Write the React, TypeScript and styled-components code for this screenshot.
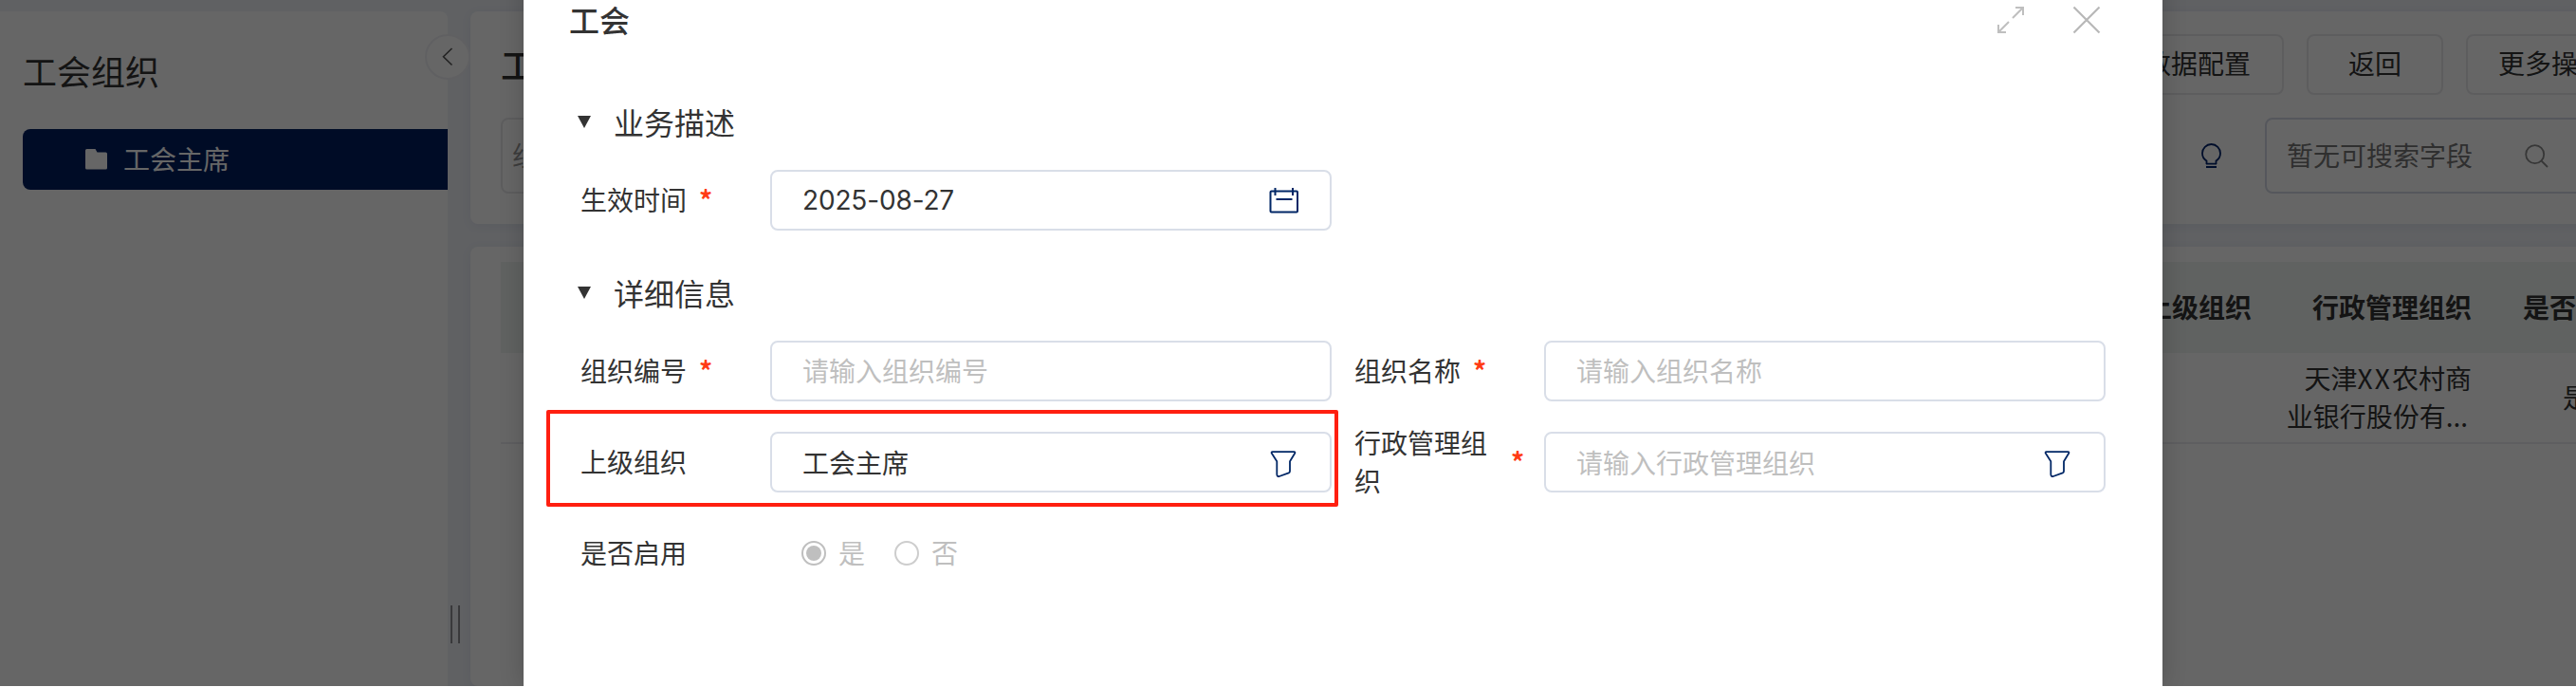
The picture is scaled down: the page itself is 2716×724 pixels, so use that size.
import React from 'react';
import styled, { createGlobalStyle } from 'styled-components';

const GlobalStyle = createGlobalStyle`
  * { box-sizing: border-box; }
  body {
    margin: 0;
    font-family: 'Noto Sans CJK SC', sans-serif;
    font-size: 28px;
    line-height: 40px;
    color: #333;
  }
`;

const Screen = styled.div`
  position: relative;
  width: 2716px;
  height: 723px;
  overflow: hidden;
  background: #eff2f8;
`;

/* ---------- page behind the dialog ---------- */

const Page = styled.div`
  display: flex;
  height: 100%;
  padding-top: 12px;
`;

const Sidebar = styled.aside`
  position: relative;
  flex: none;
  width: 472px;
  padding: 36px 0 0 24px;
  background: #fff;
  border-top-right-radius: 8px;
`;

const SidebarTitle = styled.h2`
  margin: 0 0 36px;
  font-size: 36px;
  font-weight: 400;
  line-height: 52px;
`;

const TreeItem = styled.div`
  display: flex;
  align-items: center;
  gap: 17px;
  height: 64px;
  padding-left: 66px;
  color: #fff;
  background: #001e60;
  border-radius: 8px 0 0 8px;
`;

const CollapseButton = styled.button`
  position: absolute;
  top: 24px;
  right: -24px;
  display: flex;
  align-items: center;
  justify-content: center;
  width: 48px;
  height: 48px;
  padding: 0;
  background: #fff;
  border: 2px solid #f0f1f4;
  border-radius: 50%;
`;

const Splitter = styled.div`
  display: flex;
  align-items: flex-start;
  gap: 6px;
  flex: none;
  width: 24px;
  padding: 626px 0 0 3px;
`;

const SplitterBar = styled.span`
  width: 2px;
  height: 40px;
  background: #8f9093;
`;

const Main = styled.main`
  display: flex;
  flex: none;
  flex-direction: column;
  gap: 24px;
  width: 2356px;
`;

const Card = styled.section<{ $grow?: boolean }>`
  flex: ${(p) => (p.$grow ? '1' : 'none')};
  height: ${(p) => (p.$grow ? 'auto' : '224px')};
  padding: ${(p) => (p.$grow ? '16px' : '24px')} 32px 0;
  background: #fff;
  border-radius: 8px;
  box-shadow: 0 2px 12px rgba(20, 40, 80, 0.06);
`;

const Toolbar = styled.div`
  display: flex;
  align-items: center;
  gap: 24px;
  height: 64px;
  margin-bottom: 24px;
`;

const PageTitle = styled.h1`
  flex: 1;
  margin: -3px 0 0;
  font-size: 36px;
  font-weight: 500;
`;

const Button = styled.button<{ $width: number; $start?: boolean }>`
  width: ${(p) => p.$width}px;
  height: 64px;
  padding: 0 32px 4px;
  text-align: ${(p) => (p.$start ? 'left' : 'center')};
  font: inherit;
  color: #333;
  background: #fff;
  border: 2px solid #e9e9ec;
  border-radius: 8px;
`;

const FilterBar = styled.div`
  display: flex;
  align-items: center;
  justify-content: space-between;
  height: 80px;
`;

const Text = styled.span`
  margin-top: -3px;
`;

const FilterInput = styled.div`
  display: flex;
  align-items: center;
  width: 420px;
  height: 80px;
  padding: 0 10px;
  color: #999;
  border: 2px solid #e9e9ec;
  border-radius: 8px;
`;

const FilterTools = styled.div`
  display: flex;
  align-items: center;
  gap: 46px;
`;

const SearchBox = styled.div`
  display: flex;
  align-items: center;
  gap: 55px;
  width: 432px;
  height: 80px;
  padding-left: 21px;
  color: #757575;
  border: 2px solid #d5d9e6;
  border-radius: 8px;
`;

const Row = styled.div<{ $head?: boolean }>`
  display: grid;
  grid-template-columns: 1862px 232px 188px 1fr;
  align-items: center;
  height: 96px;
  padding-bottom: 3px;
  font-weight: ${(p) => (p.$head ? 700 : 400)};
  background: ${(p) => (p.$head ? '#f1f5f3' : 'transparent')};
  border-bottom: ${(p) => (p.$head ? 'none' : '2px solid #ececf0')};
`;

const Cell = styled.div<{ $align: 'right' | 'center' }>`
  padding: 0 16px;
  text-align: ${(p) => p.$align};
`;

const CellLine = styled.div<{ $indent?: number }>`
  padding-right: ${(p) => p.$indent ?? 0}px;
`;

const Latin = styled.span`
  letter-spacing: 2.2px;
`;

const Mask = styled.div`
  position: absolute;
  inset: 0;
  background: rgba(0, 0, 0, 0.6);
`;

/* ---------- dialog ---------- */

const Dialog = styled.div`
  position: absolute;
  top: -40px;
  bottom: 0;
  left: 552px;
  width: 1728px;
  padding: 40px 60px 0 48px;
  background: #fff;
  box-shadow: 0 0 24px rgba(0, 0, 0, 0.2);
`;

const DialogHeader = styled.header`
  display: flex;
  align-items: center;
  height: 42px;
  margin-bottom: 54px;
`;

const DialogTitle = styled.h3`
  flex: 1;
  margin: -3px 0 0;
  font-size: 32px;
  font-weight: 500;
  line-height: 42px;
`;

const HeaderIcons = styled.div`
  display: flex;
  gap: 50px;
  padding-right: 5px;
`;

const SectionTitle = styled.div<{ $spaced?: boolean }>`
  display: flex;
  align-items: center;
  gap: 24px;
  height: 67px;
  margin-top: ${(p) => (p.$spaced ? '17px' : '0')};
  padding-left: 9px;
  font-size: 32px;
`;

const Triangle = styled.span`
  width: 0;
  height: 0;
  margin-top: -2px;
  border: 7px solid transparent;
  border-top: 13px solid #333;
  border-bottom: none;
`;

const FormRow = styled.div`
  display: flex;
  align-items: center;
  gap: 24px;
  height: 96px;
  padding-left: 12px;
`;

const Field = styled.div`
  display: flex;
  align-items: center;
  width: 792px;
`;

const LabelBox = styled.div`
  display: flex;
  align-items: center;
  flex: none;
  width: 200px;
`;

const Label = styled.label`
  max-width: 152px;
  margin-top: -2px;
`;

const Required = styled.span`
  margin: -2px 0 0 13px;
  font-weight: 700;
  color: #ff3b14;
`;

const Control = styled.div<{ $muted?: boolean; $lower?: boolean }>`
  display: flex;
  align-items: center;
  justify-content: space-between;
  width: 592px;
  height: 64px;
  padding: ${(p) => (p.$lower ? '3px 35px 0 32px' : '0 32px')};
  color: ${(p) => (p.$muted ? '#bfbfbf' : '#333')};
  border: 2px solid #d9dee8;
  border-radius: 8px;
`;

const DateText = styled.span`
  font-family: Inter, sans-serif;
  letter-spacing: -0.15px;
`;

const RadioGroup = styled.div`
  display: flex;
  align-items: center;
  gap: 31px;
  padding-left: 33px;
  color: #bfbfbf;
`;

const RadioOption = styled.div`
  display: flex;
  align-items: center;
  gap: 13px;
`;

const RadioMark = styled.span<{ $checked?: boolean }>`
  display: flex;
  align-items: center;
  justify-content: center;
  width: 26px;
  height: 26px;
  margin-top: -1px;
  border: 2px solid ${(p) => (p.$checked ? '#bfbfbf' : '#cdcdcd')};
  border-radius: 50%;

  &::after {
    content: '';
    width: 16px;
    height: 16px;
    border-radius: 50%;
    background: ${(p) => (p.$checked ? '#bfbfbf' : 'transparent')};
  }
`;

const Highlight = styled.div`
  position: absolute;
  top: 472px;
  left: 24px;
  width: 835px;
  height: 102px;
  border: 4px solid #ff1f10;
  border-radius: 2px;
`;

/* ---------- icons ---------- */

const FolderIcon = () => (
  <svg width="23" height="22" viewBox="0 0 23 22">
    <path d="M1.5 0H10.5L12.5 3.5H21.5Q23 3.5 23 5V20Q23 21.5 21.5 21.5H1.5Q0 21.5 0 20V1.5Q0 0 1.5 0Z" fill="#fff" />
  </svg>
);

const ChevronIcon = () => (
  <svg width="12" height="20" viewBox="0 0 12 20" fill="none" stroke="#555" strokeWidth="1.6">
    <path d="M10.5 1L1.5 9.8L10.5 18.5" />
  </svg>
);

const BulbIcon = () => (
  <svg width="21" height="26" viewBox="0 0 21 26" fill="none" stroke="#00246b" strokeWidth="1.8">
    <path d="M5.5 22V18.6C2.8 16.8 1 13.8 1 10.5C1 5.2 5.2 1 10.5 1S20 5.2 20 10.5C20 13.8 18.2 16.8 15.5 18.6V22M5 21.6H16M5 25H16" />
  </svg>
);

const SearchIcon = () => (
  <svg width="25" height="25" viewBox="0 0 25 25" fill="none" stroke="#8a8a8a" strokeWidth="1.8">
    <circle cx="10.7" cy="10.7" r="9.5" />
    <path d="M17.5 17.5L24 24" />
  </svg>
);

const ExpandIcon = () => (
  <svg width="30" height="30" viewBox="0 0 30 30" fill="none" stroke="#bfbfbf" strokeWidth="2">
    <path d="M20 2H28V10M28 2L17 13M10 28H2V20M2 28L13 17" />
  </svg>
);

const CloseIcon = () => (
  <svg width="30" height="30" viewBox="0 0 30 30" fill="none" stroke="#b8b8b8" strokeWidth="2.2">
    <path d="M1.5 1.5L28.5 28.5M28.5 1.5L1.5 28.5" />
  </svg>
);

const CalendarIcon = () => (
  <svg width="32" height="28" viewBox="0 0 32 28" fill="none" stroke="#002766" strokeWidth="2">
    <rect x="1.5" y="4.5" width="28.5" height="22" rx="1" />
    <path d="M6.5 1V9M25 1V9M7.5 13H24.5" />
  </svg>
);

const FunnelIcon = () => (
  <svg width="28" height="28" viewBox="0 0 28 28" fill="none" stroke="#002766" strokeWidth="1.8" strokeLinejoin="round">
    <path d="M2.5 1.2H25.5Q26.6 1.2 26.3 2.5L21 11.2V21.5Q21 23 19.8 23.4L9.8 27Q7.5 27.4 7.3 25V11.2L1.7 2.5Q1.4 1.2 2.5 1.2Z" />
  </svg>
);

interface FormFieldProps {
  label: string;
  required?: boolean;
  children: React.ReactNode;
}

const FormField = ({ label, required, children }: FormFieldProps) => (
  <Field>
    <LabelBox>
      <Label>{label}</Label>
      {required && <Required>*</Required>}
    </LabelBox>
    {children}
  </Field>
);

export default function App() {
  return (
    <>
      <GlobalStyle />
      <Screen>
        <Page>
          <Sidebar>
            <SidebarTitle>工会组织</SidebarTitle>
            <TreeItem>
              <FolderIcon />
              <Text>工会主席</Text>
            </TreeItem>
            <CollapseButton>
              <ChevronIcon />
            </CollapseButton>
          </Sidebar>
          <Splitter>
            <SplitterBar />
            <SplitterBar />
          </Splitter>
          <Main>
            <Card>
              <Toolbar>
                <PageTitle>工会</PageTitle>
                <Button $width={182}>数据配置</Button>
                <Button $width={144}>返回</Button>
                <Button $width={220} $start>更多操作</Button>
              </Toolbar>
              <FilterBar>
                <FilterInput>
                  <Text>组织</Text>
                </FilterInput>
                <FilterTools>
                  <BulbIcon />
                  <SearchBox>
                    <Text>暂无可搜索字段</Text>
                    <SearchIcon />
                  </SearchBox>
                </FilterTools>
              </FilterBar>
            </Card>
            <Card $grow>
              <Row $head>
                <Cell $align="right">上级组织</Cell>
                <Cell $align="right">行政管理组织</Cell>
                <Cell $align="center">是否启用</Cell>
              </Row>
              <Row>
                <Cell $align="right" />
                <Cell $align="right">
                  <CellLine>
                    天津<Latin>XX</Latin>农村商
                  </CellLine>
                  <CellLine $indent={4}>业银行股份有...</CellLine>
                </Cell>
                <Cell $align="center">是</Cell>
              </Row>
            </Card>
          </Main>
        </Page>
        <Mask />
        <Dialog>
          <DialogHeader>
            <DialogTitle>工会</DialogTitle>
            <HeaderIcons>
              <ExpandIcon />
              <CloseIcon />
            </HeaderIcons>
          </DialogHeader>

          <SectionTitle>
            <Triangle />
            <Text>业务描述</Text>
          </SectionTitle>
          <FormRow>
            <FormField label="生效时间" required>
              <Control>
                <DateText>2025-08-27</DateText>
                <CalendarIcon />
              </Control>
            </FormField>
          </FormRow>

          <SectionTitle $spaced>
            <Triangle />
            <Text>详细信息</Text>
          </SectionTitle>
          <FormRow>
            <FormField label="组织编号" required>
              <Control $muted>
                <Text>请输入组织编号</Text>
              </Control>
            </FormField>
            <FormField label="组织名称" required>
              <Control $muted>
                <Text>请输入组织名称</Text>
              </Control>
            </FormField>
          </FormRow>
          <FormRow>
            <FormField label="上级组织">
              <Control $lower>
                <Text>工会主席</Text>
                <FunnelIcon />
              </Control>
            </FormField>
            <FormField label="行政管理组织" required>
              <Control $muted $lower>
                <Text>请输入行政管理组织</Text>
                <FunnelIcon />
              </Control>
            </FormField>
          </FormRow>
          <FormRow>
            <FormField label="是否启用">
              <RadioGroup>
                <RadioOption>
                  <RadioMark $checked />
                  <Text>是</Text>
                </RadioOption>
                <RadioOption>
                  <RadioMark />
                  <Text>否</Text>
                </RadioOption>
              </RadioGroup>
            </FormField>
          </FormRow>
          <Highlight />
        </Dialog>
      </Screen>
    </>
  );
}
